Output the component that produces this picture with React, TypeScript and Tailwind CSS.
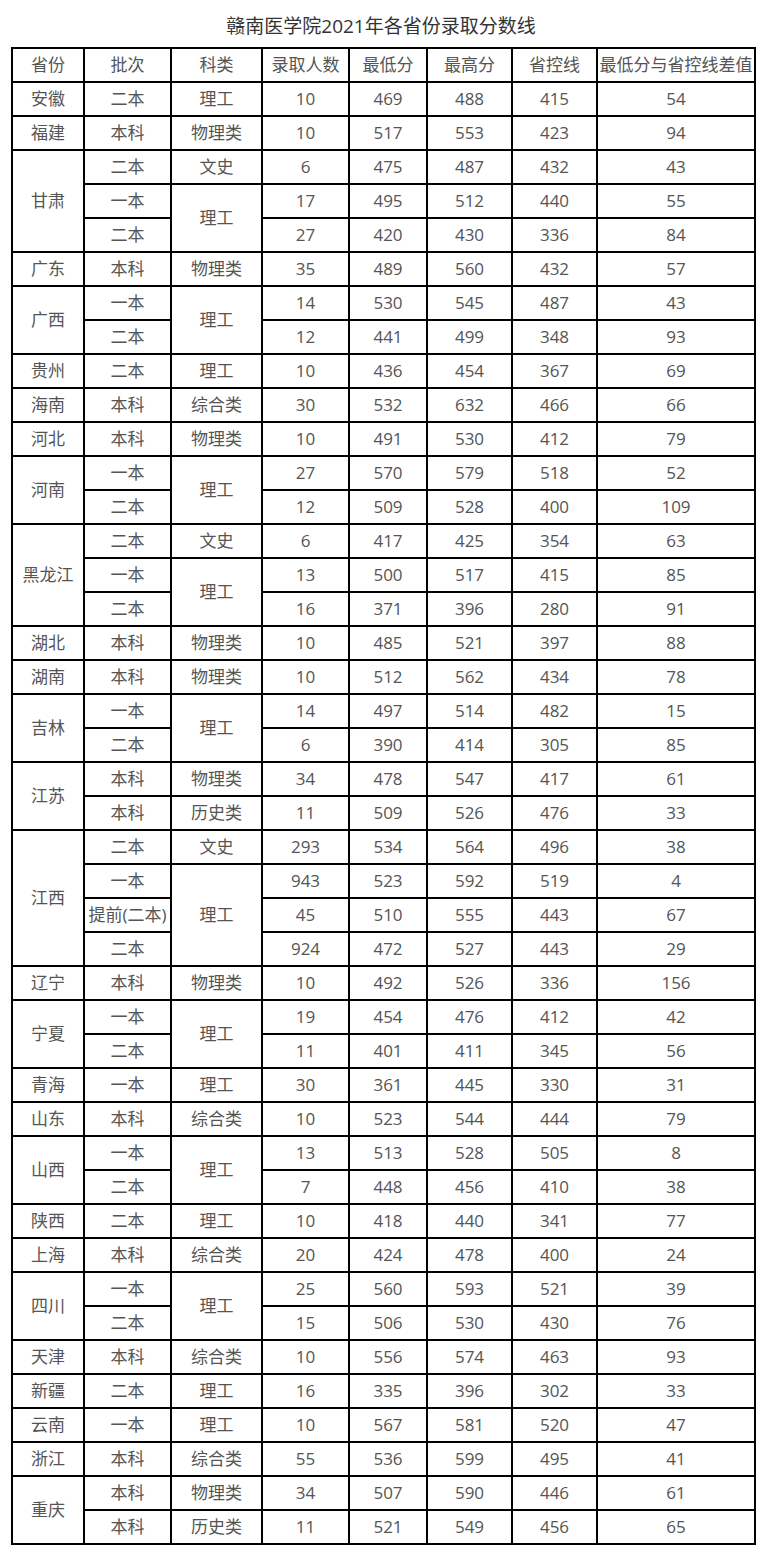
import React from 'react'

type Row = {
  prov?: string
  provSpan?: number
  batch: string
  cat?: string
  catSpan?: number
  vals: number[]
}

const r = (prov: string | undefined, provSpan: number, batch: string, cat: string | undefined, catSpan: number, vals: number[]): Row => ({
  prov,
  provSpan,
  batch,
  cat,
  catSpan,
  vals,
})

const rows: Row[] = [
  r('安徽', 1, '二本', '理工', 1, [10, 469, 488, 415, 54]),
  r('福建', 1, '本科', '物理类', 1, [10, 517, 553, 423, 94]),
  r('甘肃', 3, '二本', '文史', 1, [6, 475, 487, 432, 43]),
  r(undefined, 0, '一本', '理工', 2, [17, 495, 512, 440, 55]),
  r(undefined, 0, '二本', undefined, 0, [27, 420, 430, 336, 84]),
  r('广东', 1, '本科', '物理类', 1, [35, 489, 560, 432, 57]),
  r('广西', 2, '一本', '理工', 2, [14, 530, 545, 487, 43]),
  r(undefined, 0, '二本', undefined, 0, [12, 441, 499, 348, 93]),
  r('贵州', 1, '二本', '理工', 1, [10, 436, 454, 367, 69]),
  r('海南', 1, '本科', '综合类', 1, [30, 532, 632, 466, 66]),
  r('河北', 1, '本科', '物理类', 1, [10, 491, 530, 412, 79]),
  r('河南', 2, '一本', '理工', 2, [27, 570, 579, 518, 52]),
  r(undefined, 0, '二本', undefined, 0, [12, 509, 528, 400, 109]),
  r('黑龙江', 3, '二本', '文史', 1, [6, 417, 425, 354, 63]),
  r(undefined, 0, '一本', '理工', 2, [13, 500, 517, 415, 85]),
  r(undefined, 0, '二本', undefined, 0, [16, 371, 396, 280, 91]),
  r('湖北', 1, '本科', '物理类', 1, [10, 485, 521, 397, 88]),
  r('湖南', 1, '本科', '物理类', 1, [10, 512, 562, 434, 78]),
  r('吉林', 2, '一本', '理工', 2, [14, 497, 514, 482, 15]),
  r(undefined, 0, '二本', undefined, 0, [6, 390, 414, 305, 85]),
  r('江苏', 2, '本科', '物理类', 1, [34, 478, 547, 417, 61]),
  r(undefined, 0, '本科', '历史类', 1, [11, 509, 526, 476, 33]),
  r('江西', 4, '二本', '文史', 1, [293, 534, 564, 496, 38]),
  r(undefined, 0, '一本', '理工', 3, [943, 523, 592, 519, 4]),
  r(undefined, 0, '提前(二本)', undefined, 0, [45, 510, 555, 443, 67]),
  r(undefined, 0, '二本', undefined, 0, [924, 472, 527, 443, 29]),
  r('辽宁', 1, '本科', '物理类', 1, [10, 492, 526, 336, 156]),
  r('宁夏', 2, '一本', '理工', 2, [19, 454, 476, 412, 42]),
  r(undefined, 0, '二本', undefined, 0, [11, 401, 411, 345, 56]),
  r('青海', 1, '一本', '理工', 1, [30, 361, 445, 330, 31]),
  r('山东', 1, '本科', '综合类', 1, [10, 523, 544, 444, 79]),
  r('山西', 2, '一本', '理工', 2, [13, 513, 528, 505, 8]),
  r(undefined, 0, '二本', undefined, 0, [7, 448, 456, 410, 38]),
  r('陕西', 1, '二本', '理工', 1, [10, 418, 440, 341, 77]),
  r('上海', 1, '本科', '综合类', 1, [20, 424, 478, 400, 24]),
  r('四川', 2, '一本', '理工', 2, [25, 560, 593, 521, 39]),
  r(undefined, 0, '二本', undefined, 0, [15, 506, 530, 430, 76]),
  r('天津', 1, '本科', '综合类', 1, [10, 556, 574, 463, 93]),
  r('新疆', 1, '二本', '理工', 1, [16, 335, 396, 302, 33]),
  r('云南', 1, '一本', '理工', 1, [10, 567, 581, 520, 47]),
  r('浙江', 1, '本科', '综合类', 1, [55, 536, 599, 495, 41]),
  r('重庆', 2, '本科', '物理类', 1, [34, 507, 590, 446, 61]),
  r(undefined, 0, '本科', '历史类', 1, [11, 521, 549, 456, 65]),
]

const headers = ['省份', '批次', '科类', '录取人数', '最低分', '最高分', '省控线', '最低分与省控线差值']
const widths = [72, 87, 91, 87, 78, 85, 85, 158]

const cell = 'border-2 border-black p-0 text-center align-middle whitespace-nowrap'

export default function App() {
  return (
    <div
      className="min-h-[1559px] w-[762px] bg-white text-[#555]"
      style={{ fontFamily: '"Open Sans", "Noto Sans CJK SC", sans-serif' }}
    >
      <h1 className="h-[47px] pt-[12px] text-center text-[19px] font-normal leading-[28px] text-[#333]">
        赣南医学院2021年各省份录取分数线
      </h1>
      <table className="ml-[11px] w-[743px] table-fixed border-collapse text-[17px] leading-[20px]">
        <colgroup>
          {widths.map((w, i) => (
            <col key={i} style={{ width: w }} />
          ))}
        </colgroup>
        <thead>
          <tr className="h-[34px]">
            {headers.map((h) => (
              <th key={h} className={`${cell} font-normal`}>
                {h}
              </th>
            ))}
          </tr>
        </thead>
        <tbody>
          {rows.map((row, i) => (
            <tr key={i} className="h-[34px]">
              {row.provSpan ? (
                <td rowSpan={row.provSpan} className={cell}>
                  {row.prov}
                </td>
              ) : null}
              <td className={cell}>{row.batch}</td>
              {row.catSpan ? (
                <td rowSpan={row.catSpan} className={cell}>
                  {row.cat}
                </td>
              ) : null}
              {row.vals.map((v, j) => (
                <td key={j} className={cell}>
                  {v}
                </td>
              ))}
            </tr>
          ))}
        </tbody>
      </table>
    </div>
  )
}
